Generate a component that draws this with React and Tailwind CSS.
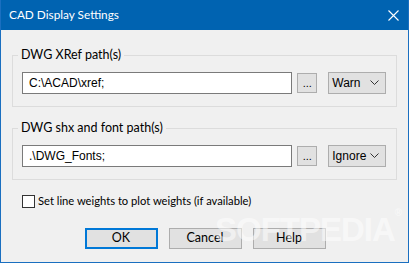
import React from "react";

const ui = { fontFamily: '"Segoe UI", Lato, "Noto Sans", sans-serif' };
const ms = { fontFamily: '"Liberation Sans", Arial, sans-serif' };

function Chevron() {
  return (
    <svg width="9" height="6" viewBox="0 0 9 6" className="shrink-0">
      <path d="M0.5 0.5 L4.5 4.5 L8.5 0.5" fill="none" stroke="#333" strokeWidth="1" />
    </svg>
  );
}

function Group({ label, value, option }) {
  return (
    <div className="relative border border-[#dcdcdc] pt-[16px] pb-[12px] pl-[9px] pr-[10px]">
      <div className="absolute top-[-9px] left-[5px] px-[3px] bg-[#f0f0f0] text-[12.5px] leading-[16px] text-black" style={ui}>
        {label}
      </div>
      <div className="flex items-center">
        <div className="w-[272px] h-[22px] border border-[#7a7a7a] bg-white flex items-center pl-[6px] text-[12px] text-black" style={ms}>
          {value}
        </div>
        <div className="ml-[5px] w-[20px] h-[20px] border border-[#adadad] bg-[#e1e1e1] flex items-end justify-center pb-[3px] text-[11px] leading-[11px] text-black" style={ms}>
          ...
        </div>
        <div className="ml-[11px] w-[58px] h-[22px] border border-[#adadad] bg-[#e1e1e1] flex items-center justify-between pl-[3px] pr-[6px] text-[12px] text-black" style={ms}>
          <span>{option}</span>
          <Chevron />
        </div>
      </div>
    </div>
  );
}

export default function App() {
  return (
    <div className="w-[409px] h-[263px] flex flex-col bg-[#f0f0f0] border-x border-b border-[#1a6fc0] relative overflow-hidden">
      <div className="h-[30px] bg-[#0063b1] flex items-center justify-between pl-[9px] pr-[10px] -mx-px shrink-0">
        <span className="text-white text-[11.8px]" style={ui}>CAD Display Settings</span>
        <svg width="11" height="11" viewBox="0 0 11 11">
          <path d="M0.5 0.5 L10.5 10.5 M10.5 0.5 L0.5 10.5" stroke="white" strokeWidth="1.1" />
        </svg>
      </div>
      <div className="flex flex-col px-[11px]">
        <div className="mt-[25px]">
          <Group label="DWG XRef path(s)" value="C:\ACAD\xref;" option="Warn" />
        </div>
        <div className="mt-[21px]">
          <Group label="DWG shx and font path(s)" value=".\DWG_Fonts;" option="Ignore" />
        </div>
        <div className="mt-[13px] ml-[10px] h-[16px] flex items-center">
          <div className="w-[13px] h-[13px] border border-[#333333] bg-white" />
          <span className="ml-[3px] text-[11.2px] text-black" style={ui}>
            Set line weights to plot weights (if available)
          </span>
        </div>
        <div className="mt-[19px] flex justify-center gap-[11px] pl-[1px]">
          <div className="w-[73px] h-[21px] border-2 border-[#0078d7] bg-[#e1e1e1] flex items-center justify-center text-[12.5px] text-black" style={ui}>OK</div>
          <div className="w-[73px] h-[21px] border border-[#adadad] bg-[#e1e1e1] flex items-center justify-center text-[12.5px] text-black" style={ui}>Cancel</div>
          <div className="w-[73px] h-[21px] border border-[#adadad] bg-[#e1e1e1] flex items-center justify-center text-[12.5px] text-black" style={ui}>Help</div>
        </div>
      </div>
      <div className="absolute left-[214px] top-[205px] text-[33px] font-bold tracking-[-1px] text-white/50 pointer-events-none" style={ms}>
        SOFTPEDIA<span className="text-[10px] align-top">®</span>
      </div>
    </div>
  );
}
